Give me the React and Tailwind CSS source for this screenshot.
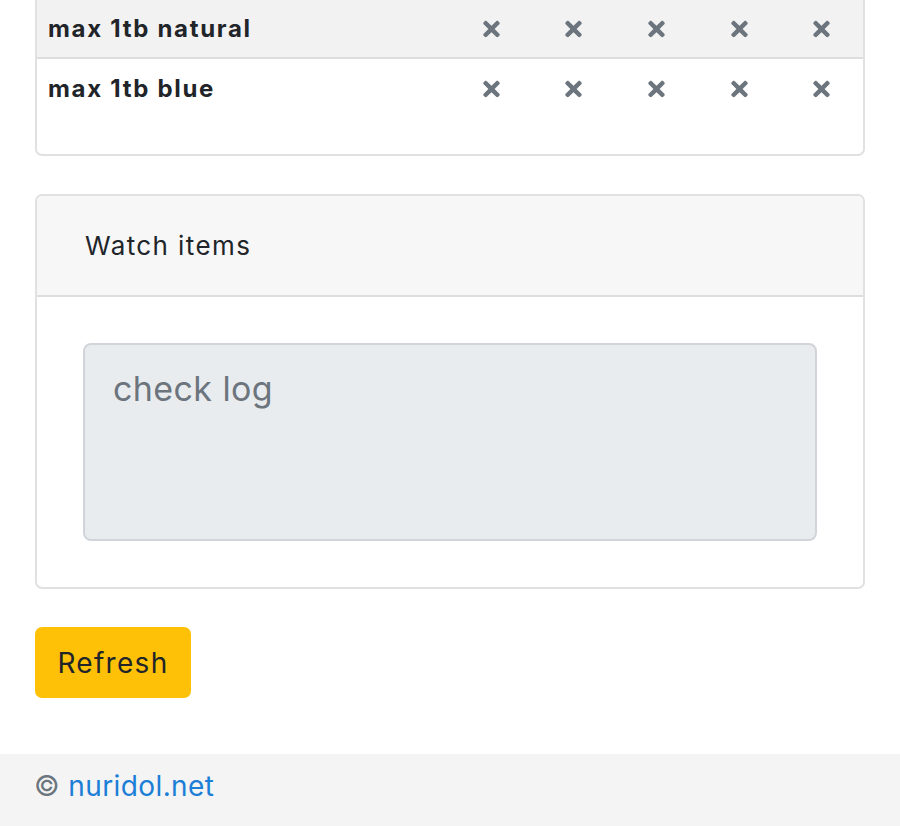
import React from 'react';
import { FaTimes } from 'react-icons/fa';

const rows = ['max 1tb natural', 'max 1tb blue'];

const App = () => {
  return (
    <div className="min-h-screen bg-white flex flex-col font-['Inter',sans-serif] text-[#212529]">
      <div className="px-[35px]">
        {/* Stock table card (scrolled, top out of view) */}
        <div className="border-x-2 border-b-2 border-[#e1e1e1] rounded-b-[7px] pb-[36px]">
          {rows.map((name, i) => (
            <div
              key={name}
              className={`grid grid-cols-[413px_repeat(5,1fr)] items-center h-[59px] ${
                i === 0 ? 'bg-[#f2f2f2] border-b-2 border-[#dedede]' : 'bg-white'
              }`}
            >
              <span className="pl-[11px] text-[24px] font-bold tracking-[1.7px]">{name}</span>
              {[0, 1, 2, 3, 4].map((c) => (
                <span key={c} className="flex justify-center">
                  <FaTimes className="w-[17px] h-[24px] text-[#6c757d]" />
                </span>
              ))}
            </div>
          ))}
        </div>

        {/* Watch items card */}
        <div className="mt-[38px] border-2 border-[#e1e1e1] rounded-[7px] overflow-hidden">
          <div className="h-[101px] bg-[#f7f7f7] border-b-2 border-[#dedede] flex items-center px-[48px]">
            <h3 className="text-[26px] font-normal tracking-[1.4px]">Watch items</h3>
          </div>
          <div className="p-[46px]">
            <textarea
              disabled
              placeholder="check log"
              className="block w-full h-[198px] bg-[#e9ecef] border-2 border-[#d1d5da] rounded-[8px] px-[28px] py-[18px] text-[34px] tracking-[0.4px] placeholder:text-[#6c757d] resize-none"
            />
          </div>
        </div>

        <button className="mt-[38px] bg-[#ffc107] rounded-[7px] w-[156px] h-[71px] text-[28px] tracking-[1.3px] text-[#212529]">
          Refresh
        </button>
      </div>

      <footer className="mt-[56px] bg-[#f4f4f4] flex-1 min-h-[72px] px-[34px] pt-[11px]">
        <p className="text-[28px] tracking-[0.4px] text-[#6c757d]">
          © <a href="#" className="text-[#1c7ed6]">nuridol.net</a>
        </p>
      </footer>
    </div>
  );
};

export default App;
